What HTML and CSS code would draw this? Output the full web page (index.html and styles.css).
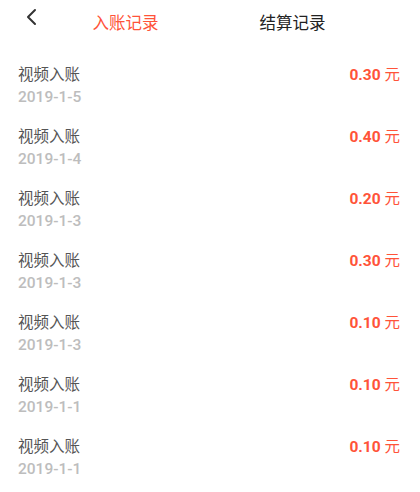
FILE: index.html
```html
<!DOCTYPE html>
<html lang="zh-CN">
<head>
    <meta charset="UTF-8">
    <meta name="viewport" content="width=device-width, initial-scale=1.0">
    <title>入账记录</title>
    <link rel="stylesheet" href="styles.css">
</head>
<body>
    <div class="header">
        <div class="back">
            <svg width="12" height="18" viewBox="0 0 12 18">
                <polyline points="9,2 2,9 9,16" fill="none" stroke="#333" stroke-width="2" stroke-linecap="round" stroke-linejoin="round"/>
            </svg>
        </div>
        <div class="tab active">入账记录</div>
        <div class="tab">结算记录</div>
    </div>

    <div class="list">
        <div class="row">
            <div class="info">
                <div class="title">视频入账</div>
                <div class="date">2019-1-5</div>
            </div>
            <div class="amount">0.30 <span class="unit">元</span></div>
        </div>
        <div class="row">
            <div class="info">
                <div class="title">视频入账</div>
                <div class="date">2019-1-4</div>
            </div>
            <div class="amount">0.40 <span class="unit">元</span></div>
        </div>
        <div class="row">
            <div class="info">
                <div class="title">视频入账</div>
                <div class="date">2019-1-3</div>
            </div>
            <div class="amount">0.20 <span class="unit">元</span></div>
        </div>
        <div class="row">
            <div class="info">
                <div class="title">视频入账</div>
                <div class="date">2019-1-3</div>
            </div>
            <div class="amount">0.30 <span class="unit">元</span></div>
        </div>
        <div class="row">
            <div class="info">
                <div class="title">视频入账</div>
                <div class="date">2019-1-3</div>
            </div>
            <div class="amount">0.10 <span class="unit">元</span></div>
        </div>
        <div class="row">
            <div class="info">
                <div class="title">视频入账</div>
                <div class="date">2019-1-1</div>
            </div>
            <div class="amount">0.10 <span class="unit">元</span></div>
        </div>
        <div class="row">
            <div class="info">
                <div class="title">视频入账</div>
                <div class="date">2019-1-1</div>
            </div>
            <div class="amount">0.10 <span class="unit">元</span></div>
        </div>
    </div>
</body>
</html>
```

FILE: styles.css
```css
body {
    margin: 0;
    background-color: #fff;
    font-family: Roboto, "Noto Sans CJK SC", sans-serif;
    overflow: hidden;
}
.header {
    display: flex;
    align-items: center;
    height: 44px;
}
.back {
    width: 42px;
    height: 44px;
    display: flex;
    align-items: center;
    margin-top: -10px;
}
.back svg {
    margin-left: 26px;
}
.tab {
    width: 167px;
    text-align: center;
    font-size: 16.5px;
    color: #222;
}
.tab.active {
    color: #ff5339;
}
.list {
    margin-top: 13px;
}
.row {
    display: flex;
    justify-content: space-between;
    height: 62px;
    padding: 7px 20px 0 18px;
    box-sizing: border-box;
}
.title {
    font-size: 15.5px;
    line-height: 22px;
    color: #555;
}
.date {
    font-size: 15.5px;
    line-height: 22px;
    font-weight: 500;
    color: #bdbdbd;
}
.amount {
    font-size: 15.5px;
    line-height: 22px;
    font-weight: bold;
    color: #ff5339;
}
.unit {
    font-weight: normal;
}
```
